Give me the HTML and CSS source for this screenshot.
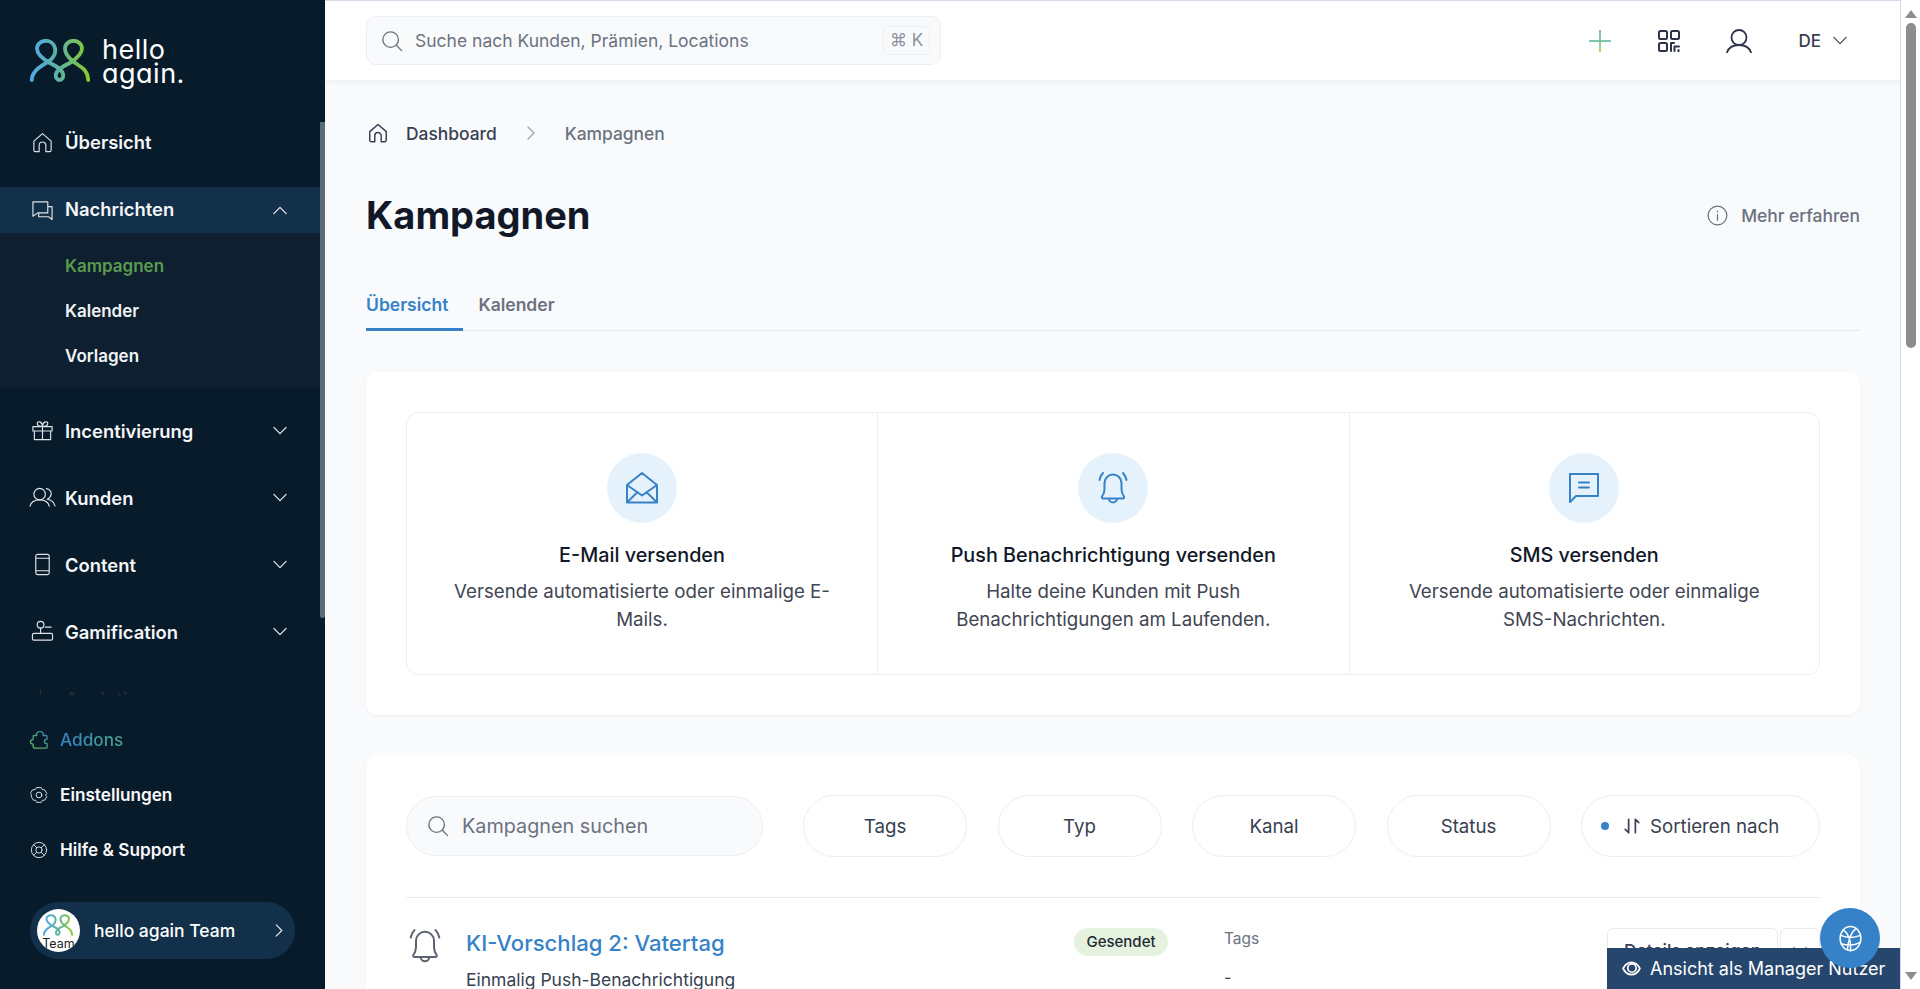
FILE: index.html
```html
<!DOCTYPE html>
<html lang="de">
<head>
<meta charset="utf-8">
<title>Kampagnen</title>
<link rel="stylesheet" href="styles.css">
</head>
<body>
<svg class="defs" width="0" height="0" aria-hidden="true">
  <defs>
    <linearGradient id="brand" x1="0" y1="0" x2="1" y2="0">
      <stop offset="0" stop-color="#4fa9e6"/><stop offset=".5" stop-color="#5fb3a0"/><stop offset="1" stop-color="#86cb2c"/>
    </linearGradient>
    <linearGradient id="plusv" gradientUnits="userSpaceOnUse" x1="0" y1="0" x2="0" y2="24">
      <stop offset="0" stop-color="#3fa3dc"/><stop offset="1" stop-color="#8ccb3a"/>
    </linearGradient>
    <linearGradient id="puzzle" gradientUnits="userSpaceOnUse" x1="0" y1="20" x2="20" y2="0">
      <stop offset="0" stop-color="#6cc04a"/><stop offset="1" stop-color="#3682c8"/>
    </linearGradient>
  </defs>
</svg>

<aside class="sidebar">
  <div class="logo">
    <svg class="logo-mark" viewBox="0 0 60 43" fill="none"><path d="M1.800 41C2 31 12 27 20 21.500C24 18 26 13.500 25 9C24 4.500 20 1.800 16 1.800C11 1.800 7 5 7 9.500C7 15 13 20 20 24C26 27 32 30 33 35C33.800 38.500 32 41 29.500 41C27 41 25.200 38.500 26 35C27 30 34 27 40 24C46 20 52 15 52 9.500C52 5 48 1.800 43.500 1.800C39 1.800 35 5 35 9.500C35 14 38 18 42 21.500C48 27 58 29 58.200 41" stroke="url(#brand)" stroke-width="3.800" stroke-linecap="round"/></svg>
    <div class="logo-text">hello<br>again.</div>
  </div>

  <div class="nav-wrap">
    <nav class="nav">
      <a class="nav-item nav-first">
        <svg class="ni" viewBox="0 0 24 24"><path d="M3 10.500 12 2.800l9 7.700V20a1.500 1.500 0 0 1-1.500 1.500H15.500V15a3.500 3.500 0 0 0-7 0v6.500H4.500A1.500 1.500 0 0 1 3 20z"/></svg>
        <span>Übersicht</span>
      </a>
      <a class="nav-item nav-active">
        <svg class="ni" viewBox="0 0 24 24"><path d="M2 3h15.500v11.500H7L3.500 17 2 18zM17.500 8H22v13.500l-3.500-3H8v-4"/></svg>
        <span>Nachrichten</span>
        <svg class="chev" viewBox="0 0 16 10"><path d="M1 8.500 8 1.500l7 7"/></svg>
      </a>
      <div class="sub">
        <a class="sub-item sub-current">Kampagnen</a>
        <a class="sub-item">Kalender</a>
        <a class="sub-item">Vorlagen</a>
      </div>
      <a class="nav-item nav-tall nav-gap">
        <svg class="ni" viewBox="0 0 24 24"><path d="M2 8h20v4.500H2zM3.500 12.500V21.500h17v-9M12 8v13.500M12 8C9 8 6.500 6.800 6.500 4.800 6.500 3.300 8 2.500 9.200 3 11 3.800 12 6 12 8zM12 8c3 0 5.500-1.200 5.500-3.200 0-1.500-1.500-2.300-2.700-1.800C13 3.800 12 6 12 8z"/></svg>
        <span>Incentivierung</span>
        <svg class="chev" viewBox="0 0 16 10"><path d="M1 1.500 8 8.500l7-7"/></svg>
      </a>
      <a class="nav-item nav-tall">
        <svg class="ni ni-wide" viewBox="0 0 28 24"><circle cx="11" cy="8.500" r="6"/><path d="M1 21c1-4.500 5-6.500 10-6.500s9 2 10 6.500M18 2.800c3.500.5 5.500 3 5 6-.3 2-1.800 4-4 5 4 .5 7 3 8 7"/></svg>
        <span>Kunden</span>
        <svg class="chev" viewBox="0 0 16 10"><path d="M1 1.500 8 8.500l7-7"/></svg>
      </a>
      <a class="nav-item nav-tall">
        <svg class="ni" viewBox="0 0 24 24"><rect x="5" y="1.500" width="14" height="21" rx="2"/><path d="M5 5.500h14M5 18.500h14"/></svg>
        <span>Content</span>
        <svg class="chev" viewBox="0 0 16 10"><path d="M1 1.500 8 8.500l7-7"/></svg>
      </a>
      <a class="nav-item nav-tall">
        <svg class="ni" viewBox="0 0 24 24"><circle cx="10" cy="5" r="3.500"/><path d="M10 8.500V14M15 7.500h6M3 14h18a1.500 1.500 0 0 1 1.500 1.500v4a1.500 1.500 0 0 1-1.500 1.500H3a1.500 1.500 0 0 1-1.500-1.500v-4A1.500 1.500 0 0 1 3 14z"/></svg>
        <span>Gamification</span>
        <svg class="chev" viewBox="0 0 16 10"><path d="M1 1.500 8 8.500l7-7"/></svg>
      </a>
      <a class="nav-item nav-tall">
        <svg class="ni" viewBox="0 0 24 24"><path d="M3 21V11M10 21V4M17 21v-7"/></svg>
        <span>Analytics</span>
        <svg class="chev" viewBox="0 0 16 10"><path d="M1 1.500 8 8.500l7-7"/></svg>
      </a>
    </nav>
    <div class="nav-thumb"></div>
    <div class="nav-fade"></div>
  </div>

  <div class="bottom">
    <a class="bottom-item">
      <svg class="bi" viewBox="0 0 20 20" stroke="url(#puzzle)"><path d="M4.500 5H7.500c-1-3 1.500-4.500 3.500-4.500s4.500 1.500 3.500 4.500H18a1 1 0 0 1 1 1v3c-2 0-3 1-3 2.500s1 2.500 3 2.500v4a1 1 0 0 1-1 1H5a1.500 1.500 0 0 1-1.500-1.500V14.500c-1.500 0-3-1-3-2.500s1.500-2.500 3-2.500V6a1 1 0 0 1 1-1z"/></svg>
      <span class="addons">Addons</span>
    </a>
    <a class="bottom-item">
      <svg class="bi bi-w" viewBox="0 0 20 20"><circle cx="10" cy="10" r="3.200"/><path d="M7.500 1.800h5l1.200 2.300 2.600.2 2.400 4-1.500 1.700 1.500 1.700-2.400 4-2.600.2-1.200 2.300h-5l-1.200-2.300-2.600-.2-2.400-4L1.800 10 .3 8.300l2.400-4 2.600-.2z"/></svg>
      <span>Einstellungen</span>
    </a>
    <a class="bottom-item">
      <svg class="bi bi-w" viewBox="0 0 20 20"><circle cx="10" cy="10" r="8.500"/><circle cx="10" cy="10" r="3.500"/><path d="m4 4 3.500 3.500M16 4l-3.500 3.500M4 16l3.500-3.500M16 16l-3.500-3.500"/></svg>
      <span>Hilfe &amp; Support</span>
    </a>
    <a class="team">
      <span class="avatar">
        <svg class="avatar-mark" viewBox="0 0 60 43" fill="none"><path d="M1.800 41C2 31 12 27 20 21.500C24 18 26 13.500 25 9C24 4.500 20 1.800 16 1.800C11 1.800 7 5 7 9.500C7 15 13 20 20 24C26 27 32 30 33 35C33.800 38.500 32 41 29.500 41C27 41 25.200 38.500 26 35C27 30 34 27 40 24C46 20 52 15 52 9.500C52 5 48 1.800 43.500 1.800C39 1.800 35 5 35 9.500C35 14 38 18 42 21.500C48 27 58 29 58.200 41" stroke="url(#brand)" stroke-width="4" stroke-linecap="round"/></svg>
        <span class="avatar-text">Team</span>
      </span>
      <span class="team-name">hello again Team</span>
      <svg class="team-chev" viewBox="0 0 10 16"><path d="M1.500 1 8.500 8l-7 7"/></svg>
    </a>
  </div>
</aside>

<div class="main">
  <header class="topbar">
    <div class="search">
      <svg class="search-ic" viewBox="0 0 24 24"><circle cx="10.500" cy="10.500" r="8.500"/><path d="m17 17 5.500 5.500"/></svg>
      <span class="search-ph">Suche nach Kunden, Prämien, Locations</span>
      <span class="kbd">⌘ K</span>
    </div>
    <div class="top-actions">
      <svg class="plus" viewBox="0 0 24 24"><rect x="0" y="11.200" width="24" height="1.600" fill="#4fb398"/><rect x="11.200" y="0" width="1.600" height="24" fill="url(#plusv)"/></svg>
      <svg class="qr" viewBox="0 0 22 22"><rect x="1" y="1" width="8" height="8" rx="1.500"/><rect x="13" y="1" width="8" height="8" rx="1.500"/><rect x="1" y="13" width="8" height="8" rx="1.500"/><path d="M13 13v8M13 13h3M16.500 16.500v4.500M16.500 16.500h4.500M20.500 20v1.500"/></svg>
      <svg class="user" viewBox="0 0 26 24"><circle cx="13" cy="8.500" r="7.500"/><path d="M1 23.500C2.500 19 7 16 13 16s10.500 3 12 7.500"/></svg>
      <div class="lang"><span>DE</span><svg class="lang-chev" viewBox="0 0 16 10"><path d="M1 1.500 8 8.500l7-7"/></svg></div>
    </div>
  </header>

  <div class="content">
    <div class="crumbs">
      <svg class="crumb-home" viewBox="0 0 24 24"><path d="M3 10.500 12 2.800l9 7.700V20a1.500 1.500 0 0 1-1.500 1.500H15.500V15a3.500 3.500 0 0 0-7 0v6.500H4.500A1.500 1.500 0 0 1 3 20z"/></svg>
      <span class="crumb-link">Dashboard</span>
      <svg class="crumb-sep" viewBox="0 0 8 14"><path d="m1 1 6 6-6 6"/></svg>
      <span class="crumb-cur">Kampagnen</span>
    </div>

    <div class="title-row">
      <h1>Kampagnen</h1>
      <a class="more">
        <svg class="more-ic" viewBox="0 0 22 22"><circle cx="11" cy="11" r="9.800"/><path d="M11 10v6M11 6.500v.8"/></svg>
        <span>Mehr erfahren</span>
      </a>
    </div>

    <div class="tabs">
      <a class="tab tab-on">Übersicht</a>
      <a class="tab">Kalender</a>
    </div>

    <section class="card card-top">
      <div class="channels">
        <div class="channel">
          <span class="ch-ic"><svg viewBox="0 0 34 34"><path d="M2 14 17 2l15 12v17.500H2zM2 14l15 10.500L32 14M2 31.500 12.500 21M32 31.500 21.500 21"/></svg></span>
          <h3>E-Mail versenden</h3>
          <p>Versende automatisierte oder einmalige E-Mails.</p>
        </div>
        <div class="channel">
          <span class="ch-ic"><svg viewBox="0 0 34 34"><path d="M6 25.500c1.500-2 2.500-4 2.500-7.500v-6a8.500 8.500 0 0 1 17 0v6c0 3.500 1 5.500 2.500 7.500.5 1-.2 2-1.200 2H7.200c-1 0-1.700-1-1.200-2zM13 27.500a4 4 0 0 0 8 0M3.500 9c.5-2.800 1.700-5 3.500-7M30.500 9c-.5-2.800-1.700-5-3.500-7"/></svg></span>
          <h3>Push Benachrichtigung versenden</h3>
          <p>Halte deine Kunden mit Push Benachrichtigungen am Laufenden.</p>
        </div>
        <div class="channel">
          <span class="ch-ic"><svg viewBox="0 0 34 34"><path d="M3 3h28v22H9l-6 6zM12 11.500h10M12 16.500h10"/></svg></span>
          <h3>SMS versenden</h3>
          <p>Versende automatisierte oder einmalige SMS-Nachrichten.</p>
        </div>
      </div>
    </section>

    <section class="card card-list">
      <div class="filters">
        <div class="f-search">
          <svg class="f-search-ic" viewBox="0 0 24 24"><circle cx="10.500" cy="10.500" r="8.500"/><path d="m17 17 5.500 5.500"/></svg>
          <span>Kampagnen suchen</span>
        </div>
        <div class="f-group">
          <button class="f-btn">Tags</button>
          <button class="f-btn">Typ</button>
          <button class="f-btn">Kanal</button>
          <button class="f-btn">Status</button>
          <button class="f-btn f-sort">
            <i class="dot"></i>
            <svg class="sort-ic" viewBox="0 0 16 16"><path d="M5 2v12M5 14l-3-3M11 14V2M11 2l3 3"/></svg>
            <span>Sortieren nach</span>
          </button>
        </div>
      </div>
      <div class="row">
        <svg class="row-ic" viewBox="0 0 34 34"><path d="M6 25.500c1.500-2 2.500-4 2.500-7.500v-6a8.500 8.500 0 0 1 17 0v6c0 3.500 1 5.500 2.500 7.500.5 1-.2 2-1.200 2H7.200c-1 0-1.700-1-1.200-2zM13 27.500a4 4 0 0 0 8 0M3.500 9c.5-2.800 1.700-5 3.500-7M30.500 9c-.5-2.800-1.700-5-3.500-7"/></svg>
        <div class="row-main">
          <a class="row-title">KI-Vorschlag 2: Vatertag</a>
          <div class="row-sub">Einmalig Push-Benachrichtigung</div>
        </div>
        <div><span class="badge">Gesendet</span></div>
        <div class="row-tags">
          <div class="tags-label">Tags</div>
          <div class="tags-val">-</div>
        </div>
        <div class="row-actions">
          <button class="act act-main">Details anzeigen</button>
          <button class="act act-more"><svg class="act-chev" viewBox="0 0 16 10"><path d="M1 1.500 8 8.500l7-7"/></svg></button>
        </div>
      </div>
    </section>
  </div>

  <div class="manager">
    <svg class="eye" viewBox="0 0 20 16"><path d="M1 8c2-4 5-6.500 9-6.500S17 4 19 8c-2 4-5 6.500-9 6.500S3 12 1 8z"/><circle cx="10.500" cy="7.500" r="4.500" class="eye-in"/></svg>
    <span>Ansicht als Manager Nutzer</span>
  </div>
  <div class="globe">
    <svg viewBox="0 0 24 26"><ellipse cx="12" cy="13" rx="10" ry="11.500"/><path d="M5 4.500c5 4 8 11 7 20.500M17 3.500c-3.500 3-7 10-8 20M2.500 10c6 2.500 13 2.500 19 0M3 18c6 2 13 1.500 18-1"/></svg>
  </div>
</div>

<div class="scrollbar">
  <i class="arrow-up"></i>
  <div class="thumb"></div>
  <i class="arrow-down"></i>
</div>
</body>
</html>
```
FILE: styles.css
```css
* { box-sizing: border-box; }
html, body { margin: 0; height: 100%; overflow: hidden; }
body {
  display: flex;
  font-family: Inter, "Liberation Sans", sans-serif;
  background: #f9fafc;
  color: #111827;
}
.defs { position: absolute; }
a { color: inherit; text-decoration: none; }
svg { display: block; flex: none; fill: none; stroke-linecap: round; stroke-linejoin: round; }

/* sidebar */
.sidebar {
  width: 325px;
  flex: none;
  height: 989px;
  background: #081b2b;
  color: #fff;
  display: flex;
  flex-direction: column;
}
.logo {
  height: 122px;
  flex: none;
  padding: 39px 0 0 30px;
  display: flex;
  gap: 12px;
}
.logo-mark { width: 60px; height: 43px; }
.logo-text {
  font-family: Inter, sans-serif;
  font-feature-settings: "cv11" 1;
  font-size: 27px;
  line-height: 24px;
  letter-spacing: .5px;
  margin-top: -1px;
}
.nav-wrap { position: relative; flex: 1; min-height: 0; overflow: hidden; }
.nav { width: 320px; }
.nav-item {
  display: flex;
  align-items: center;
  height: 46px;
  padding: 0 33px 0 31px;
  font-size: 18.400px;
  font-weight: 600;
  color: #f4f6f8;
}
.nav-item span { margin-left: 11px; flex: 1; }
.nav-first { margin-bottom: 22px; margin-top: -3px; }
.nav-active { background: #13304a; }
.nav-active span { position: relative; top: -1px; }
.nav-tall { height: 66.900px; }
.nav-gap { margin-top: 9.500px; }
.ni { width: 23px; height: 23px; stroke: #dfe4e8; stroke-width: 1.200; }
.ni-wide { width: 27px; height: 23px; margin-left: -2px; margin-right: -2px; }
.chev { width: 14px; height: 9px; stroke: #e8ecef; stroke-width: 1.400; }
.sub { background: #0e1f2f; height: 155px; padding-top: 11px; }
.sub-item {
  display: block;
  height: 45px;
  line-height: 45px;
  padding-left: 65px;
  font-size: 17px;
  font-weight: 600;
  color: #f0f3f5;
}
.sub-current { color: #5a9b4f; }
.nav-thumb {
  position: absolute;
  right: 0;
  top: 0;
  width: 5px;
  height: 496px;
  background: #5c6b78;
  border-radius: 0 0 3px 3px;
}
.nav-fade {
  position: absolute;
  left: 0;
  right: 5px;
  bottom: 0;
  height: 22px;
  background: linear-gradient(to bottom, rgba(8,27,43,.45) 0, #081b2b 100%);
}
.bottom { flex: none; height: 292px; padding-top: 15px; }
.bottom-item {
  display: flex;
  align-items: center;
  height: 55px;
  padding-left: 30px;
  font-size: 17.200px;
  font-weight: 600;
  color: #f8f9fa;
}
.bottom-item span { margin-left: 12px; }
.bi { width: 18px; height: 18px; fill: none; stroke-width: 1.400; }
.bi-w { stroke: #d5dade; stroke-width: 1.100; }
.addons {
  font-weight: 500;
  background: linear-gradient(90deg, #3682c8, #4aa38a);
  -webkit-background-clip: text;
  background-clip: text;
  color: transparent;
}
.team {
  margin: 25px 0 0 30px;
  width: 265px;
  height: 57px;
  border-radius: 29px;
  background: #13304a;
  display: flex;
  align-items: center;
  padding: 0 12px 0 7px;
}
.avatar {
  width: 43px;
  height: 43px;
  border-radius: 50%;
  background: #fff;
  position: relative;
  overflow: hidden;
  flex: none;
}
.avatar-mark { width: 30px; height: 22px; margin: 5px 0 0 6px; }
.avatar-text {
  display: block;
  color: #222;
  font-size: 12.500px;
  line-height: 13px;
  text-align: center;
  margin-top: 1px;
}
.team-name { flex: 1; margin-left: 14px; font-size: 17.500px; font-weight: 500; }
.team-chev { width: 8px; height: 15px; stroke: #e8ecef; stroke-width: 1.400; }

/* main */
.main {
  position: relative;
  width: 1576px;
  flex: none;
  height: 989px;
  overflow: hidden;
  border-top: 1px solid #d3dbe8;
  border-right: 1px solid #d3dbe8;
}
.topbar {
  height: 79px;
  background: #fff;
  box-shadow: 0 1px 6px rgba(30,50,80,.07);
  display: flex;
  align-items: center;
  justify-content: space-between;
  padding: 0 0 0 41px;
  position: relative;
}
.search {
  width: 575px;
  height: 49px;
  background: #f9fafc;
  border: 1px solid #eceef3;
  border-radius: 10px;
  display: flex;
  align-items: center;
  padding: 0 10px 0 14px;
}
.search-ic { width: 22px; height: 22px; stroke: #6b7280; stroke-width: 1.500; }
.search-ph { flex: 1; margin-left: 12px; font-size: 17.500px; color: #6b7280; }
.kbd {
  width: 47px;
  height: 29px;
  border: 1px solid #eef0f4;
  border-radius: 5px;
  font-size: 17px;
  line-height: 27px;
  text-align: center;
  color: #8b93a1;
}
.top-actions { display: flex; align-items: center; padding-right: 53px; }
.plus { width: 22px; height: 22px; }
.qr { width: 22px; height: 22px; margin-left: 47px; stroke: #2d3348; stroke-width: 2; }
.user { width: 26px; height: 24px; margin-left: 46px; stroke: #2d3348; stroke-width: 1.800; }
.lang { display: flex; align-items: center; margin-left: 46px; font-size: 17px; font-weight: 500; color: #374151; gap: 12px; }
.lang-chev { width: 14px; height: 9px; stroke: #374151; stroke-width: 1.300; }

.content { padding: 0 40px 0 41px; }
.crumbs { display: flex; align-items: center; height: 46px; margin-top: 30px; }
.crumb-home { width: 22px; height: 22px; stroke: #374151; stroke-width: 1.600; margin-left: 1px; }
.crumb-link { margin-left: 17px; font-size: 17.400px; font-weight: 500; color: #374151; }
.crumb-sep { width: 8px; height: 14px; margin-left: 30px; stroke: #9aa1ad; stroke-width: 1.200; }
.crumb-cur { margin-left: 30px; font-size: 17.400px; font-weight: 500; color: #6b7280; }
.title-row { display: flex; align-items: center; justify-content: space-between; height: 60px; margin-top: 29px; }
h1 { margin: 0; font-size: 38px; font-weight: 700; color: #111827; }
.more { display: flex; align-items: center; gap: 13px; font-size: 17.400px; font-weight: 500; color: #6b7280; }
.more-ic { width: 21px; height: 21px; stroke: #6b7280; stroke-width: 1.300; }
.tabs { display: flex; gap: 15px; height: 57px; margin-top: 29px; border-bottom: 1px solid #e7e9ee; align-items: flex-end; }
.tab {
  height: 47px;
  padding: 10px 15px 0 0;
  font-size: 17.500px;
  font-weight: 600;
  color: #6b7280;
  margin-bottom: -1px;
}
.tab-on { color: #3682c8; border-bottom: 3px solid #3682c8; }

.card { background: #fff; border-radius: 12px; box-shadow: 0 1px 3px rgba(30,50,80,.05); padding: 40px; }
.card-top { margin-top: 41px; height: 343px; }
.channels {
  display: grid;
  grid-template-columns: 470px 471.500px 1fr;
  height: 263px;
  border: 1px solid #eceef3;
  border-radius: 12px;
}
.channel { border-left: 1px solid #eceef3; padding: 40px 43px 0; text-align: center; }
.channel:first-child { border-left: 0; }
.ch-ic {
  display: flex;
  align-items: center;
  justify-content: center;
  width: 70px;
  height: 70px;
  border-radius: 50%;
  background: #e5f2fb;
  margin: 0 auto;
}
.ch-ic svg { width: 34px; height: 34px; stroke: #3682c8; stroke-width: 2; }
h3 { margin: 19px -30px 0; font-size: 19.800px; line-height: 26px; font-weight: 500; color: #111827; }
.channel p { margin: 10px 0 0; font-size: 18.700px; line-height: 28px; color: #3f4553; }

.card-list { margin-top: 40px; height: 400px; }
.filters { display: flex; align-items: center; height: 62px; }
.f-search {
  width: 357px;
  height: 60px;
  flex: none;
  border: 1px solid #eceef3;
  border-radius: 30px;
  background: #f9fafc;
  display: flex;
  align-items: center;
  padding-left: 20px;
  font-size: 19.800px;
  color: #6b7280;
}
.f-search span { margin-left: 13px; }
.f-search-ic { width: 22px; height: 22px; stroke: #6b7280; stroke-width: 1.500; }
.f-group { flex: 1; margin-left: 40px; display: flex; gap: 30.500px; }
.f-btn {
  flex: 1;
  height: 62px;
  border: 1px solid #eceef3;
  border-radius: 31px;
  background: #fff;
  font-family: inherit;
  font-size: 18.700px;
  color: #374151;
  display: flex;
  align-items: center;
  justify-content: center;
  padding: 0;
}
.f-sort { flex: none; width: 239px; justify-content: flex-start; padding-left: 19px; }
.dot { width: 8px; height: 8px; border-radius: 50%; background: #3682c8; margin-right: 14px; }
.sort-ic { width: 18px; height: 18px; stroke: #374151; stroke-width: 1.500; margin-right: 9px; }
.row {
  margin-top: 40px;
  border-top: 1px solid #e9ebef;
  padding-top: 30px;
  display: grid;
  grid-template-columns: 60px 608px 150px 383px 213px;
}
.row-ic { width: 36px; height: 36px; stroke: #5c6270; stroke-width: 1.900; margin-left: 1px; }
.row-title { display: block; font-size: 22.100px; line-height: 31px; font-weight: 500; color: #3682c8; }
.row-sub { margin-top: 7px; font-size: 17.500px; line-height: 28px; color: #374151; }
.badge {
  display: block;
  width: 94px;
  height: 28px;
  border-radius: 14px;
  background: #e4f2df;
  font-size: 15px;
  font-weight: 500;
  line-height: 28px;
  text-align: center;
  color: #1f2a33;
}
.tags-label { font-size: 15.500px; line-height: 22px; color: #6b7280; }
.tags-val { margin-top: 16px; font-size: 16px; line-height: 22px; color: #374151; }
.row-actions { display: flex; gap: 2px; }
.act { height: 44px; background: #fff; border: 1px solid #e9ebef; border-radius: 6px; font-family: inherit; font-size: 17.400px; font-weight: 500; color: #374151; padding: 0; }
.act-main { width: 171px; }
.act-more { width: 40px; display: flex; align-items: center; justify-content: center; }
.act-chev { width: 14px; height: 9px; stroke: #6b7280; stroke-width: 1.400; }

.manager {
  position: absolute;
  left: 1282px;
  bottom: 0;
  width: 294px;
  height: 41px;
  background: #26466d;
  color: #fff;
  display: flex;
  align-items: center;
  padding-left: 15px;
  font-size: 18px;
  gap: 9px;
  white-space: nowrap;
}
.eye { width: 19px; height: 15px; stroke: #fff; stroke-width: 1.800; }
.eye-in { fill: #26466d; stroke: #fff; }
.globe {
  position: absolute;
  left: 1495px;
  top: 907px;
  width: 60px;
  height: 60px;
  border-radius: 50%;
  background: #3682c8;
  display: flex;
  align-items: center;
  justify-content: center;
}
.globe svg { width: 25px; height: 27px; stroke: #fff; stroke-width: 1.400; }

/* page scrollbar */
.scrollbar { flex: 1; background: #fff; position: relative; }
.thumb { position: absolute; left: 5px; right: 4px; top: 23px; height: 325px; background: #8d8d8d; border-radius: 6px; }
.arrow-up, .arrow-down { position: absolute; left: 4px; width: 0; height: 0; border: 6px solid transparent; }
.arrow-up { top: 4px; border-bottom: 8px solid #8d8d8d; }
.arrow-down { bottom: 3px; border-top: 8px solid #8d8d8d; }
```
